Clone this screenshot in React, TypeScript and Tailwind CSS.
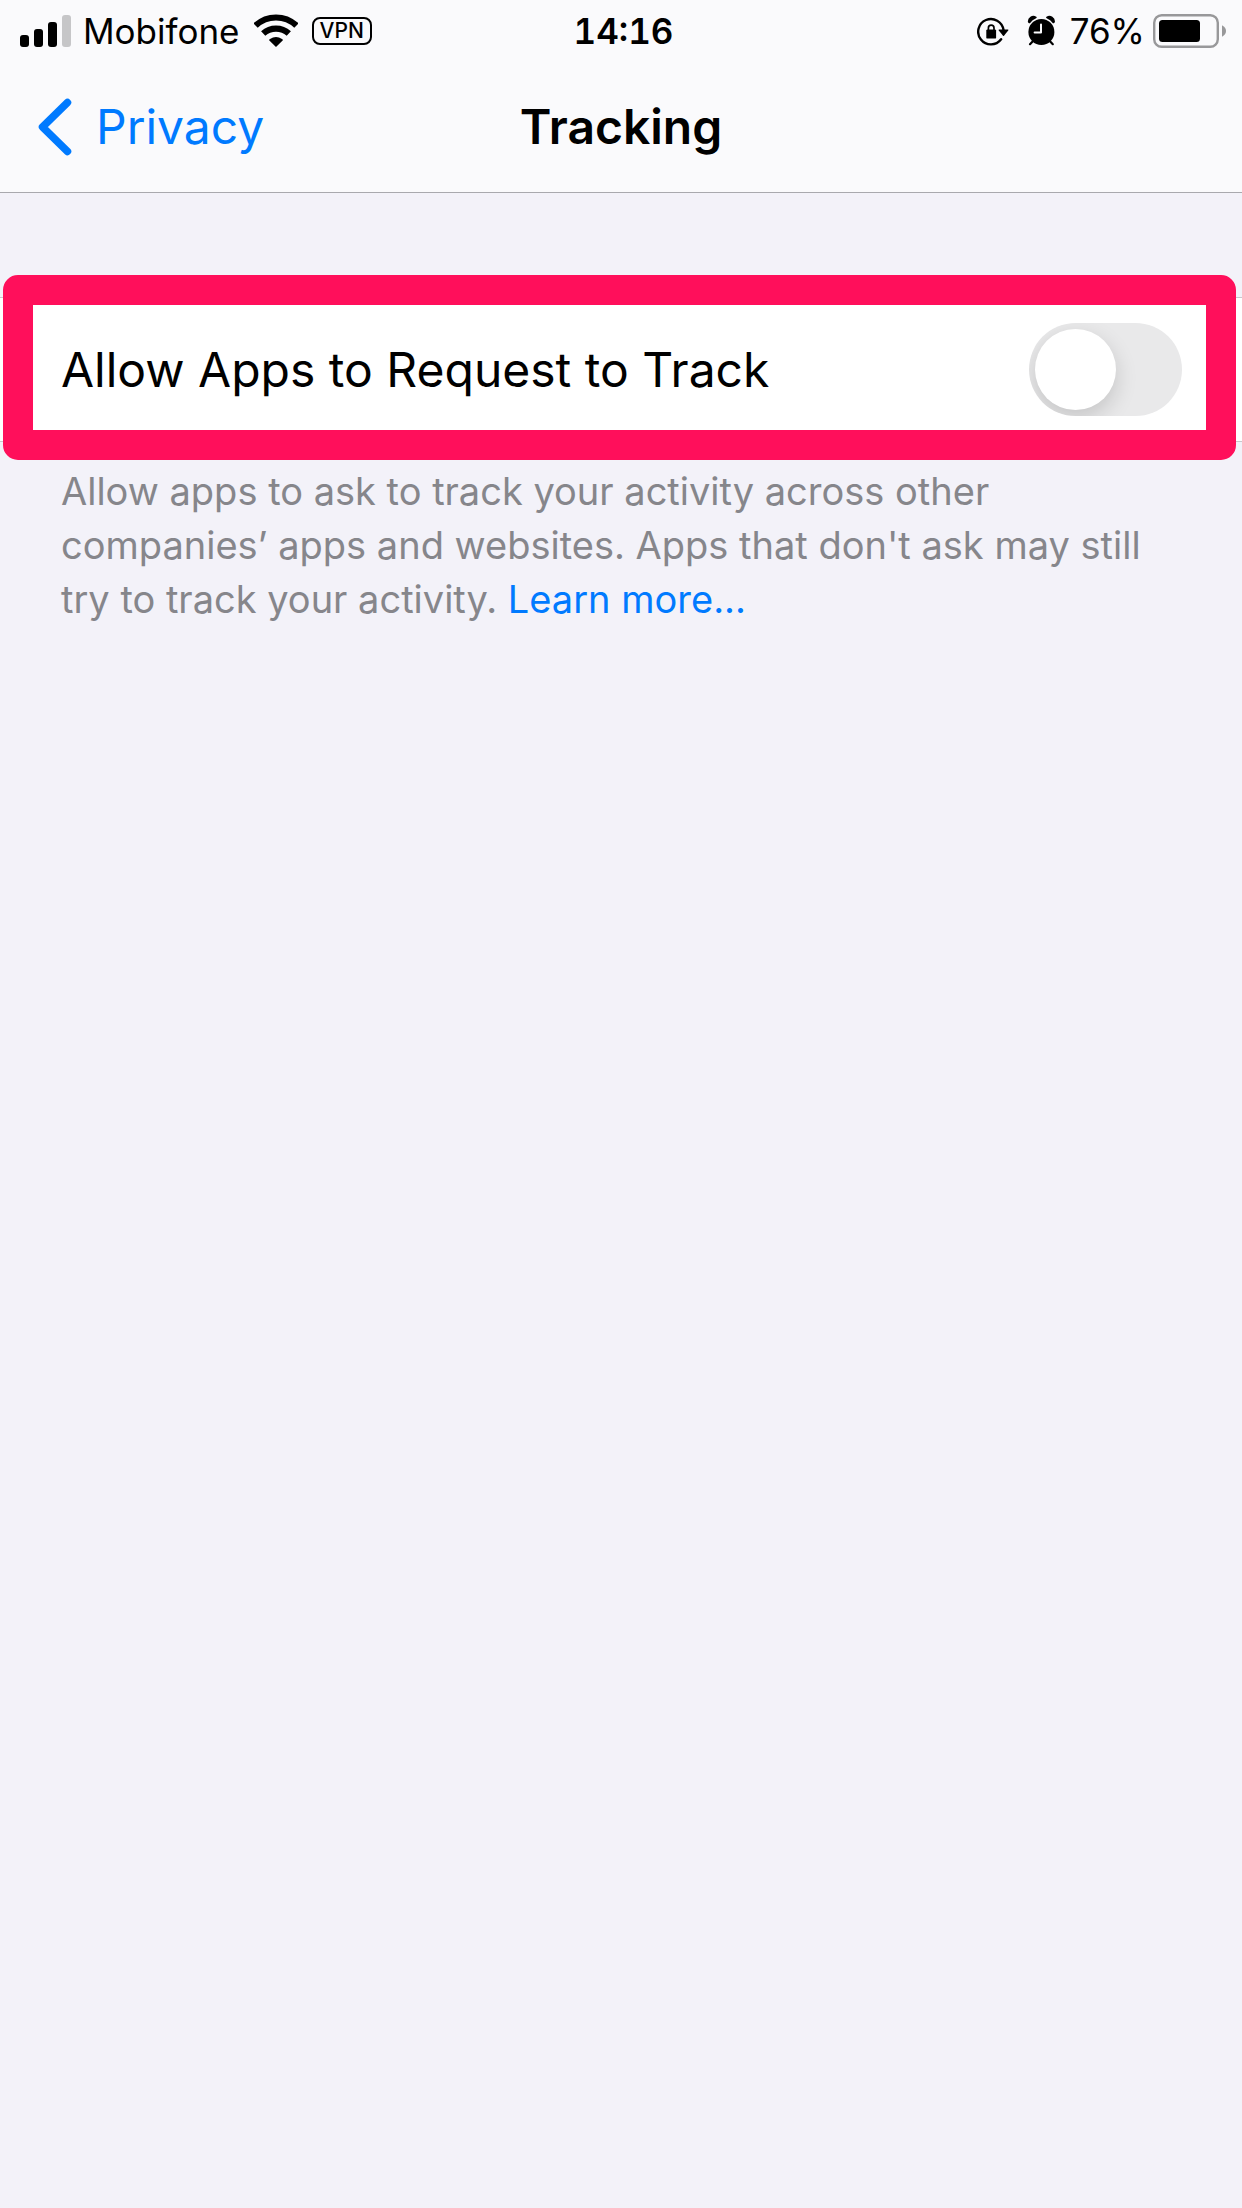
function SignalBars() {
  return (
    <div className="flex items-end gap-[5px]" role="img" aria-label="Signal strength: 3 of 4 bars">
      <span className="h-3 w-[9px] rounded-[3px] bg-black" />
      <span className="h-[18px] w-[9px] rounded-[3px] bg-black" />
      <span className="h-[25px] w-[9px] rounded-[3px] bg-black" />
      <span className="h-8 w-[9px] rounded-[3px] bg-[#c6c6c8]" />
    </div>
  );
}

function WifiIcon() {
  return (
    <svg viewBox="0 0 44 33" className="h-[33px] w-11" role="img" aria-label="Wi-Fi">
      <g fill="none" stroke="black" strokeWidth="6.2">
        <path d="M1.6 11.6A29.8 29.8 0 0 1 42.4 11.6" />
        <path d="M9.2 19.6A18.8 18.8 0 0 1 34.8 19.6" />
      </g>
      <path d="M22 33L15.1 26.2Q15.1 25.4 16 24.9A11 11 0 0 1 28 24.9Q28.9 25.4 28.9 26.2Z" />
    </svg>
  );
}

function RotationLockIcon() {
  return (
    <svg viewBox="0 0 32 30" className="h-[30px] w-8" role="img" aria-label="Rotation lock">
      <path
        d="M24.1 23.3A12.7 12.7 0 1 1 26.5 14"
        fill="none"
        stroke="black"
        strokeWidth="2.4"
        strokeLinecap="round"
      />
      <path d="M22 13.6H31Q31.6 13.8 31.2 14.5L27 19.8Q26.5 20.3 26 19.8L21.8 14.5Q21.4 13.8 22 13.6Z" />
      <rect x="9.3" y="13.4" width="9.8" height="9.2" rx="1.2" />
      <path d="M11.4 15V12A2.8 2.8 0 0 1 17 12V15" fill="none" stroke="black" strokeWidth="1.7" />
    </svg>
  );
}

function AlarmIcon() {
  return (
    <svg viewBox="0 0 29 31" className="h-[31px] w-[29px]" role="img" aria-label="Alarm">
      <circle cx="14.4" cy="17" r="13" />
      <path d="M1.8 6.8A4.6 4.6 0 0 1 8.8 2.4Q4.6 4 2.4 7.4Z" stroke="black" strokeWidth="1.8" strokeLinejoin="round" />
      <path d="M27 6.8A4.6 4.6 0 0 0 20 2.4Q24.2 4 26.4 7.4Z" stroke="black" strokeWidth="1.8" strokeLinejoin="round" />
      <path d="M5.6 26.5L3 29.2M23.2 26.5L25.8 29.2" stroke="black" strokeWidth="2.2" strokeLinecap="round" />
      <path
        d="M14 9.4V17.6H7.6"
        fill="none"
        stroke="#fafafc"
        strokeWidth="2"
        strokeLinecap="round"
        strokeLinejoin="round"
      />
    </svg>
  );
}

function BatteryIcon() {
  return (
    <svg viewBox="0 0 74 34" className="h-[34px] w-[74px]" role="img" aria-label="Battery">
      <rect x="1.2" y="1.2" width="63.6" height="31.6" rx="7.5" fill="none" stroke="#98989a" strokeWidth="2.4" />
      <rect x="6" y="6" width="41" height="22" rx="3.5" />
      <path d="M69 11.2Q73 13.4 73 17T69 22.8Z" fill="#98989a" />
    </svg>
  );
}

function StatusBar() {
  return (
    <div className="grid h-[61px] grid-cols-[1fr_auto_1fr] items-center pr-[15px] pl-5 text-[35px] leading-[42px]">
      <div className="flex items-center gap-3.5">
        <div className="flex items-center gap-3">
          <SignalBars />
          <span>Mobifone</span>
        </div>
        <WifiIcon />
        <span className="rounded-[8px] border-2 border-black px-1.5 text-[21px] leading-6 font-medium">VPN</span>
      </div>
      <time className="font-semibold tabular-nums">14:16</time>
      <div className="flex items-center justify-end gap-[18px]">
        <RotationLockIcon />
        <div className="flex items-center gap-3.5">
          <AlarmIcon />
          <div className="flex items-center gap-2">
            <span>76%</span>
            <BatteryIcon />
          </div>
        </div>
      </div>
    </div>
  );
}

function NavigationBar() {
  return (
    <nav className="grid h-[131px] grid-cols-[1fr_auto_1fr] items-center px-[37px] text-[48px] leading-15">
      <button type="button" className="flex items-center gap-6 justify-self-start text-[#007aff]">
        <svg viewBox="0 0 35 58" className="h-[58px] w-[35px]" aria-hidden="true">
          <path
            d="M30.5 4.5L5.5 29L30.5 53.5"
            fill="none"
            stroke="currentColor"
            strokeWidth="7.5"
            strokeLinecap="round"
            strokeLinejoin="round"
          />
        </svg>
        <span>Privacy</span>
      </button>
      <h1 className="font-semibold">Tracking</h1>
    </nav>
  );
}

function TrackingSetting() {
  return (
    <div className="relative flex items-center justify-between border-y border-[#c9c8cd] bg-white py-[25px] pr-[60px] pl-[61px]">
      <label htmlFor="allow-tracking" className="text-[48px] leading-15">
        Allow Apps to Request to Track
      </label>
      <input
        id="allow-tracking"
        type="checkbox"
        role="switch"
        className="h-[93px] w-[153px] shrink-0 cursor-pointer appearance-none overflow-hidden rounded-full bg-[#e9e9ea] p-1.5 transition-colors before:block before:size-[81px] before:rounded-full before:bg-white before:shadow-[0_8px_22px_rgba(0,0,0,0.16)] before:transition-transform checked:bg-[#34c759] checked:before:translate-x-15"
      />
      <div className="pointer-events-none absolute -top-[23px] right-1.5 -bottom-[19px] left-[3px] rounded-[15px] border-30 border-[#ff0f5b]" />
    </div>
  );
}

export default function App() {
  return (
    <div className="min-h-screen bg-[#f3f2f9] font-['Inter',sans-serif] text-black">
      <header className="border-b border-[#a9a9ae] bg-[#fafafc]">
        <StatusBar />
        <NavigationBar />
      </header>
      <main className="pt-[104px]">
        <TrackingSetting />
        <p className="pt-[22px] pr-[60px] pl-[61px] text-[38px] leading-[54px] text-[#86868b]">
          Allow apps to ask to track your activity across other companies’ apps and websites. Apps that don't ask may
          still try to track your activity.{" "}
          <a href="#learn-more" className="text-[#007aff]">
            Learn more...
          </a>
        </p>
      </main>
    </div>
  );
}
